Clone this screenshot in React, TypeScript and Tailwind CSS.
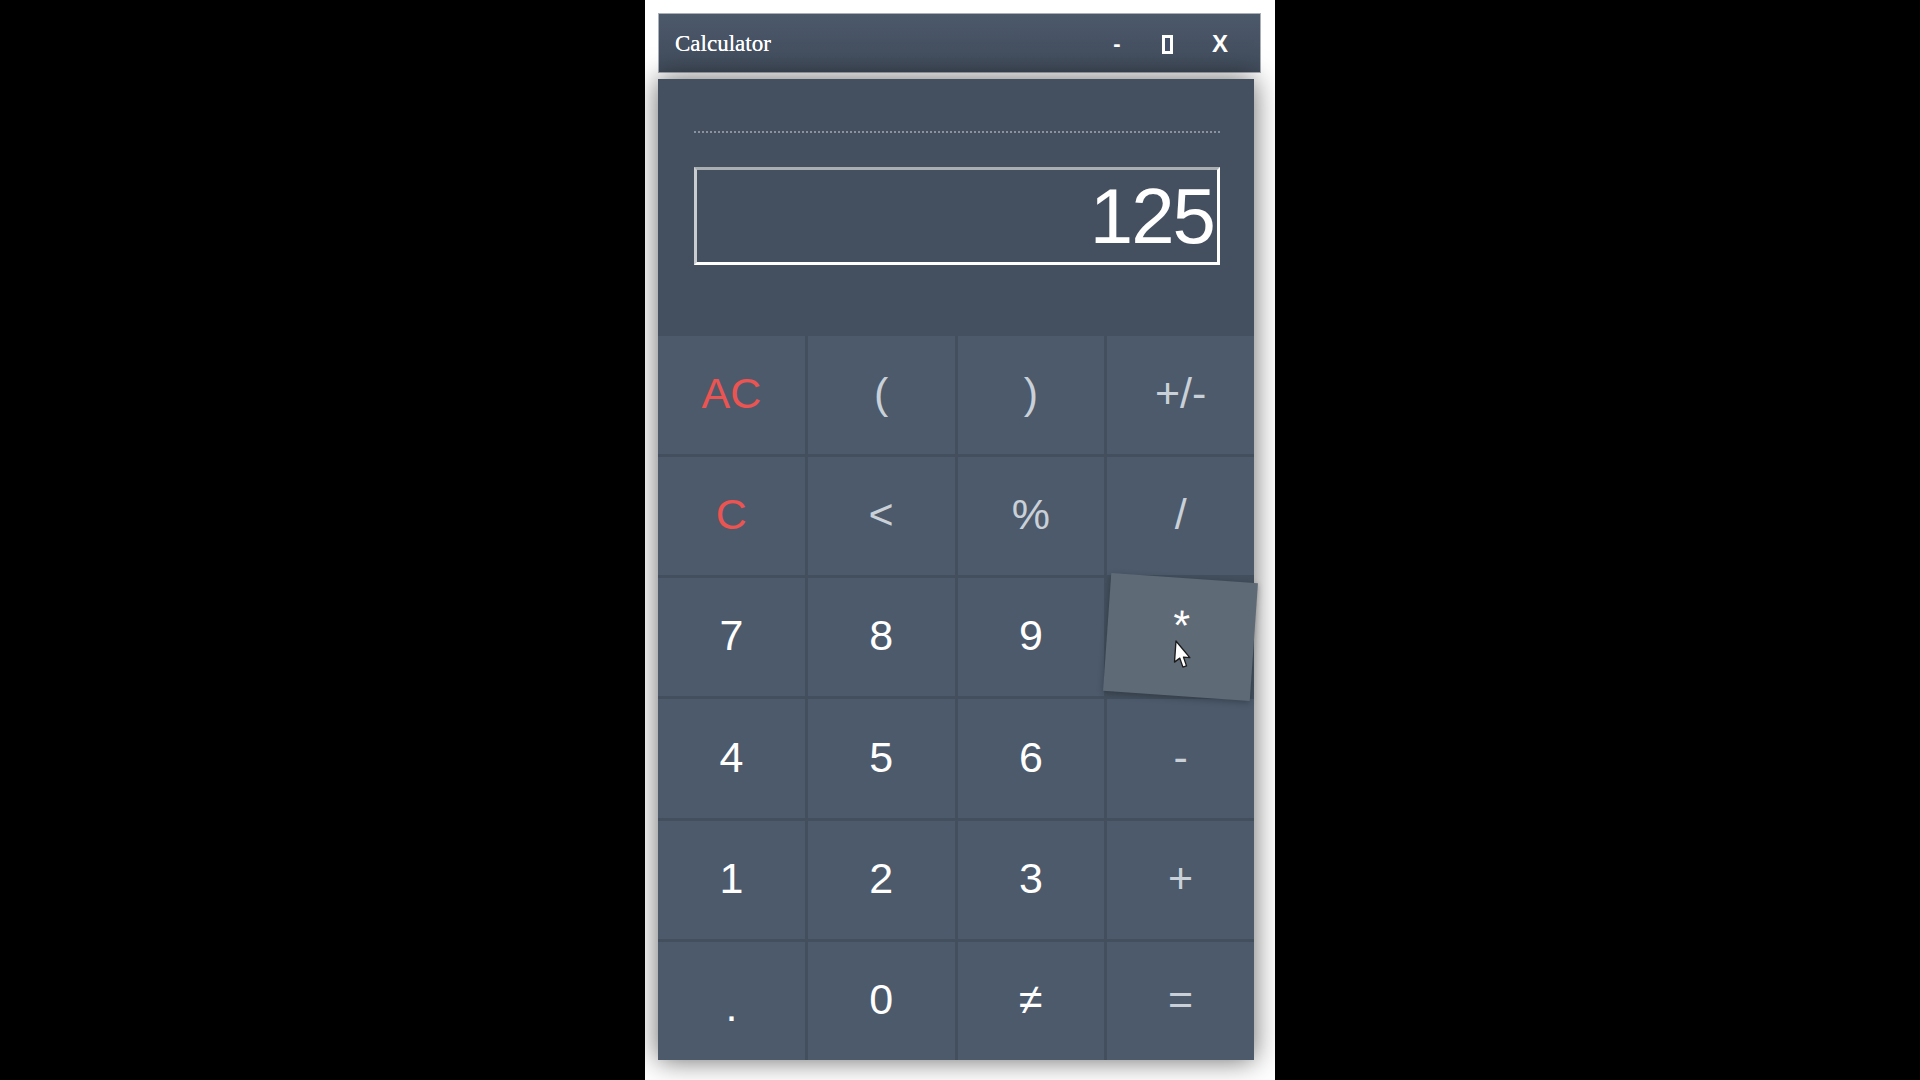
import { clsx } from 'clsx';

type Key = {
  label: string;
  tone: 'red' | 'op' | 'num';
  hover?: boolean;
};

const keys: Key[] = [
  { label: 'AC', tone: 'red' },
  { label: '(', tone: 'op' },
  { label: ')', tone: 'op' },
  { label: '+/-', tone: 'op' },
  { label: 'C', tone: 'red' },
  { label: '<', tone: 'op' },
  { label: '%', tone: 'op' },
  { label: '/', tone: 'op' },
  { label: '7', tone: 'num' },
  { label: '8', tone: 'num' },
  { label: '9', tone: 'num' },
  { label: '*', tone: 'num', hover: true },
  { label: '4', tone: 'num' },
  { label: '5', tone: 'num' },
  { label: '6', tone: 'num' },
  { label: '-', tone: 'op' },
  { label: '1', tone: 'num' },
  { label: '2', tone: 'num' },
  { label: '3', tone: 'num' },
  { label: '+', tone: 'op' },
  { label: '.', tone: 'num' },
  { label: '0', tone: 'num' },
  { label: '≠', tone: 'num' },
  { label: '=', tone: 'op' },
];

function Pointer() {
  return (
    <svg
      className="absolute left-[68px] top-[62px]"
      width="20"
      height="30"
      viewBox="0 0 16 24"
    >
      <path
        d="M1 1 L1 18 L5 14.5 L8 21.5 L10.8 20.3 L7.9 13.5 L13 13.5 Z"
        fill="#ffffff"
        stroke="#1b1b1b"
        strokeWidth="1.1"
        strokeLinejoin="round"
      />
    </svg>
  );
}

function KeyButton({ k }: { k: Key }) {
  return (
    <button
      className={clsx(
        'relative flex items-center justify-center text-[43px] leading-none font-["Liberation_Sans",Arial,sans-serif]',
        k.hover
          ? 'z-10 rotate-[4deg] bg-[#5f6a77] shadow-[0_2px_6px_rgba(0,0,0,0.25)]'
          : 'bg-[#4c5a6b]',
        k.tone === 'red' && 'text-[#ec5452]',
        k.tone === 'op' && 'text-[#c9d0d8]',
        k.tone === 'num' && 'text-white'
      )}
    >
      <span
        className={clsx(
          '-mt-[3px]',
          k.label === '*' && '-mt-[24px]',
          k.label === '.' && 'mt-[12px]'
        )}
      >
        {k.label}
      </span>
      {k.hover && <Pointer />}
    </button>
  );
}

function TitleBar() {
  return (
    <div className="flex items-center h-[60px] w-[603px] border border-[#aab0b7] bg-gradient-to-b from-[#4c596b] to-[#414c5b]">
      <span className="pl-[16px] pt-[2px] text-[23px] text-white font-['Liberation_Serif','Times_New_Roman',serif] [text-shadow:0_0_0.6px_#fff]">
        Calculator
      </span>
      <div className="ml-auto flex items-center pr-[20px] pt-[2px] text-white font-['Liberation_Sans',Arial,sans-serif] font-bold">
        <span className="w-[40px] text-center text-[22px] leading-none">-</span>
        <span className="ml-[10px] w-[40px] flex justify-center">
          <span className="block w-[11px] h-[19px] border-[3px] border-white bg-[#44506a]" />
        </span>
        <span className="ml-[13px] w-[40px] text-center text-[24px] leading-none">X</span>
      </div>
    </div>
  );
}

function Display() {
  return (
    <div className="flex flex-col h-[257px] px-[36px] pt-[52px]">
      <div className="w-[526px] border-t-2 border-dotted border-[#8a939d]" />
      <div className="mt-[34px] w-[526px] h-[98px] flex items-center justify-end pr-[3px] border-[3px] border-white border-t-[#a9aeb3] border-l-[#c9cdd1] bg-[#445060]">
        <span className="text-[78px] leading-none text-white font-['Liberation_Sans',Arial,sans-serif] tracking-[-2px]">
          125
        </span>
      </div>
    </div>
  );
}

export default function App() {
  return (
    <div className="w-full h-[1080px] bg-black flex justify-center overflow-hidden">
      <div className="w-[630px] h-full bg-white pl-[13px] pt-[13px]">
        <TitleBar />
        <div className="mt-[6px] w-[596px] h-[981px] bg-[#445060] shadow-[0_0_26px_rgba(0,0,0,0.6)] flex flex-col">
          <Display />
          <div className="grid grid-cols-4 grid-rows-6 gap-[3px] flex-1 bg-[#434f5d]">
            {keys.map((k) => (
              <KeyButton key={k.label} k={k} />
            ))}
          </div>
        </div>
      </div>
    </div>
  );
}
